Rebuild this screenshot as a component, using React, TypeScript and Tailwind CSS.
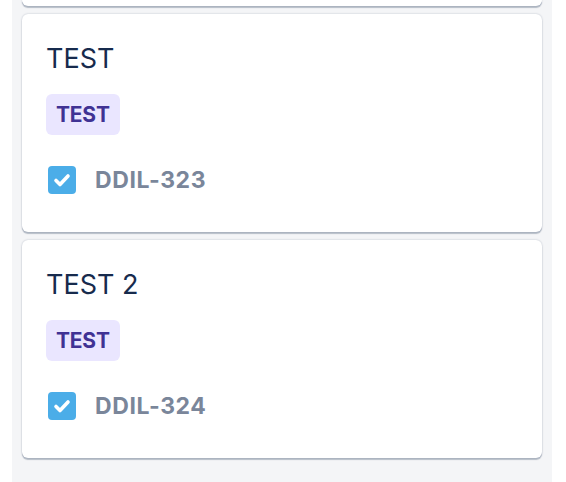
const font = { fontFamily: "Inter, 'Noto Sans', sans-serif" };

type Issue = { title: string; label: string; issueKey: string };

const issues: Issue[] = [
  { title: "TEST", label: "TEST", issueKey: "DDIL-323" },
  { title: "TEST 2", label: "TEST", issueKey: "DDIL-324" },
];

function TaskIcon() {
  return (
    <svg width="28" height="28" viewBox="0 0 28 28" className="shrink-0">
      <rect x="0" y="0" width="28" height="28" rx="4" fill="#4bade8" />
      <path
        d="M8 14.5l4 4 8-8.5"
        fill="none"
        stroke="#fff"
        strokeWidth="3.6"
        strokeLinecap="round"
        strokeLinejoin="round"
      />
    </svg>
  );
}

function IssueCard({ issue }: { issue: Issue }) {
  return (
    <div className="flex flex-col rounded-md bg-white px-6 pb-[38px] pt-[28px] shadow-[0_2px_1px_rgba(9,30,66,0.25),0_0_2px_rgba(9,30,66,0.25)]">
      <div className="text-[27px] font-normal leading-[34px] text-[#172b4d]">{issue.title}</div>
      <div className="mt-[18px] flex">
        <span className="flex h-[41px] items-center rounded-md bg-[#eae6ff] px-[10px] text-[21px] font-bold tracking-[-0.2px] text-[#403294]">
          {issue.label}
        </span>
      </div>
      <div className="mt-[31px] flex h-[28px] items-center gap-[19px] pl-[2px]">
        <TaskIcon />
        <span className="text-[23px] font-bold tracking-[0.6px] text-[#7a869a]">{issue.issueKey}</span>
      </div>
    </div>
  );
}

export default function App() {
  return (
    <div className="h-[482px] w-[566px] overflow-hidden bg-white" style={font}>
      <div className="ml-3 flex h-full w-[540px] flex-col gap-2 bg-[#f4f5f7] px-[10px]">
        {/* tail of the card above */}
        <div className="h-[6px] rounded-b-md bg-white shadow-[0_2px_1px_rgba(9,30,66,0.25),0_0_2px_rgba(9,30,66,0.25)]" />
        {issues.map((issue) => (
          <IssueCard key={issue.issueKey} issue={issue} />
        ))}
      </div>
    </div>
  );
}
